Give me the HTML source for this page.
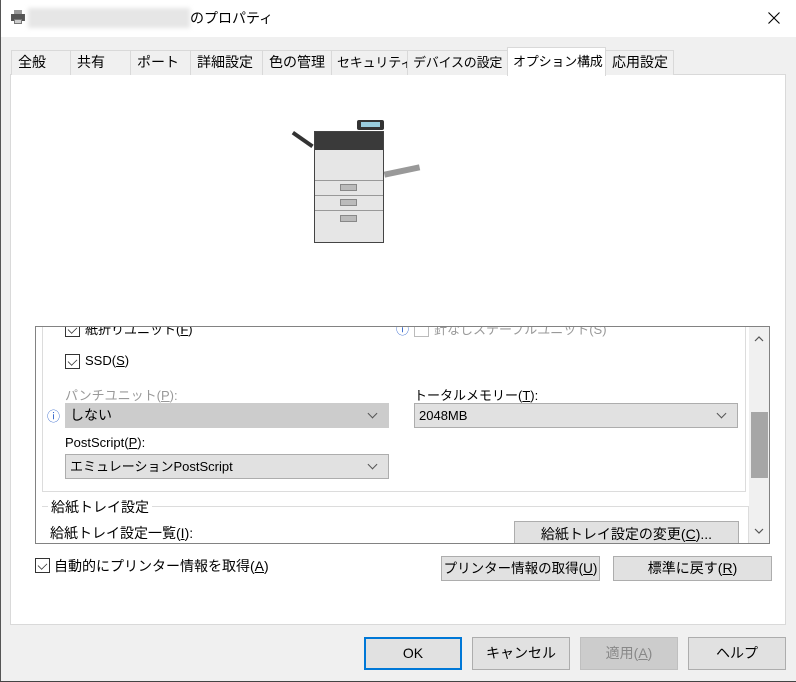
<!DOCTYPE html>
<html><head><meta charset="utf-8"><style>
*{box-sizing:border-box;margin:0;padding:0}
body{width:796px;height:682px;background:#f0f0f0;font-family:"Liberation Sans","Noto Sans CJK JP",sans-serif;font-size:13px;color:#000;position:relative;overflow:hidden}
.a{position:absolute;white-space:nowrap}
.tab{position:absolute;top:50px;height:25px;border:1px solid #d9d9d9;border-bottom:none;background:#f0f0f0;font-size:14px;line-height:23px;padding-left:6px;white-space:nowrap;overflow:hidden}
.tab.n{font-size:13px;letter-spacing:-0.2px;padding-left:5px}
.btn{position:absolute;background:#e1e1e1;border:1px solid #adadad;text-align:center;font-size:14px;white-space:nowrap}
.cb{position:absolute;width:15px;height:15px;border:1px solid #333;background:#fff}
.cb:after{content:"";position:absolute;left:3px;top:1px;width:6px;height:9px;border:solid #333;border-width:0 1.5px 1.5px 0;transform:rotate(45deg) scale(.8);}
.dd{position:absolute;height:25px;border:1px solid #adadad;background:#e1e1e1;line-height:23px;padding-left:4px;font-size:13px;white-space:nowrap}
.dd:after{content:"";position:absolute;right:12px;top:6px;width:6px;height:6px;border:solid #555;border-width:0 1px 1px 0;transform:rotate(45deg)}
u{text-decoration:underline}
</style></head><body>
<div class="a" style="left:0;top:0;width:796px;height:37px;background:#fff"></div>
<div class="a" style="left:0;top:0;width:1px;height:682px;background:#555"></div>
<div class="a" style="left:0;top:681px;width:796px;height:1px;background:#444"></div>
<div class="a" style="left:11px;top:10px;width:14px;height:14px;">
<div class="a" style="left:3px;top:0;width:8px;height:5px;background:#999"></div>
<div class="a" style="left:0;top:4px;width:14px;height:7px;background:#555"></div>
<div class="a" style="left:3px;top:9px;width:8px;height:5px;background:#ccc;border:1px solid #777"></div>
</div>
<div class="a" style="left:28px;top:8px;width:162px;height:20px;background:#e6e6e6;filter:blur(2px)"></div>
<div class="a" style="left:190px;top:8px;font-size:14px;line-height:20px">のプロパティ</div>
<svg class="a" style="left:768px;top:12px" width="12" height="12"><path d="M0.5 0.5L11.5 11.5M11.5 0.5L0.5 11.5" stroke="#000" stroke-width="1.1"/></svg>

<div class="a" style="left:10px;top:74px;width:776px;height:551px;background:#fff;border:1px solid #d9d9d9"></div>
<div class="tab" style="left:11px;width:60px">全般</div>
<div class="tab" style="left:70px;width:61px">共有</div>
<div class="tab" style="left:130px;width:61px">ポート</div>
<div class="tab" style="left:190px;width:73px">詳細設定</div>
<div class="tab" style="left:262px;width:70px">色の管理</div>
<div class="tab n" style="left:331px;width:77px">セキュリティ</div>
<div class="tab n" style="left:407px;width:101px">デバイスの設定</div>
<div class="tab n" style="left:507px;top:47px;height:29px;width:99px;background:#fff;line-height:27px;z-index:2">オプション構成</div>
<div class="tab" style="left:605px;width:69px">応用設定</div>

<div class="a" style="left:294px;top:131px;width:24px;height:4px;background:#333;transform:rotate(35deg);transform-origin:0 0"></div>
<div class="a" style="left:357px;top:120px;width:27px;height:10px;background:#333;border-radius:2px"></div>
<div class="a" style="left:361px;top:122px;width:19px;height:5px;background:#9cd"></div>
<div class="a" style="left:314px;top:131px;width:70px;height:112px;background:#e6e6e6;border:1px solid #444"></div>
<div class="a" style="left:315px;top:132px;width:68px;height:18px;background:#3a3a3a"></div>
<div class="a" style="left:315px;top:180px;width:68px;height:1px;background:#999"></div>
<div class="a" style="left:315px;top:195px;width:68px;height:1px;background:#999"></div>
<div class="a" style="left:315px;top:210px;width:68px;height:1px;background:#999"></div>
<div class="a" style="left:340px;top:184px;width:17px;height:7px;background:#bbb;border:1px solid #888"></div>
<div class="a" style="left:340px;top:199px;width:17px;height:7px;background:#bbb;border:1px solid #888"></div>
<div class="a" style="left:340px;top:215px;width:17px;height:7px;background:#bbb;border:1px solid #888"></div>
<div class="a" style="left:384px;top:168px;width:36px;height:6px;background:#999;transform:rotate(-12deg)"></div>

<div class="a" style="left:35px;top:326px;width:735px;height:218px;border:1px solid #828282;background:#fff;overflow:hidden">
 <div class="a" style="left:6px;top:-10px;width:704px;height:175px;border:1px solid #dcdcdc"></div>
 <div class="cb" style="left:29px;top:-5px"></div>
 <div class="a" style="left:49px;top:-8px;font-size:13px;color:#000">紙折りユニット(<u>F</u>)</div>
 <div class="a" style="left:360px;top:-8px;color:#36c">ⓘ</div>
 <div class="a" style="left:378px;top:-5px;width:15px;height:15px;border:1px solid #bbb"></div>
 <div class="a" style="left:398px;top:-8px;color:#999">針なしステープルユニット(S)</div>
 <div class="cb" style="left:29px;top:27px"></div>
 <div class="a" style="left:49px;top:26px">SSD(<u>S</u>)</div>
 <div class="a" style="left:29px;top:58px;color:#999">パンチユニット(<u>P</u>):</div>
 <div class="a" style="left:11px;top:79px;color:#36c">ⓘ</div>
 <div class="dd" style="left:29px;top:76px;width:324px;background:#ccc;border-color:#ccc;font-size:14px">しない</div>
 <div class="a" style="left:29px;top:108px">PostScript(<u>P</u>):</div>
 <div class="dd" style="left:29px;top:127px;width:324px">エミュレーションPostScript</div>
 <div class="a" style="left:378px;top:58px">トータルメモリー(<u>T</u>):</div>
 <div class="dd" style="left:378px;top:76px;width:324px">2048MB</div>
 <div class="a" style="left:6px;top:179px;width:707px;height:60px;border-top:1px solid #dcdcdc;border-right:1px solid #dcdcdc"></div>
 <div class="a" style="left:12px;top:170px;background:#fff;padding:0 3px;font-size:14px">給紙トレイ設定</div>
 <div class="a" style="left:14px;top:196px;font-size:14px">給紙トレイ設定一覧(<u>I</u>):</div>
 <div class="btn" style="left:478px;top:194px;width:225px;height:28px;line-height:24px">給紙トレイ設定の変更(<u>C</u>)...</div>
 <div class="a" style="left:713px;top:0;width:20px;height:216px;background:#f0f0f0"></div>
 <div class="a" style="left:715px;top:85px;width:17px;height:66px;background:#a6a6a6"></div>
 <svg class="a" style="left:718px;top:9px" width="10" height="6"><path d="M1 5L5 1L9 5" fill="none" stroke="#555" stroke-width="1.2"/></svg>
 <svg class="a" style="left:718px;top:201px" width="10" height="6"><path d="M1 1L5 5L9 1" fill="none" stroke="#555" stroke-width="1.2"/></svg>
</div>

<div class="cb" style="left:35px;top:558px"></div>
<div class="a" style="left:54px;top:556px;font-size:14px">自動的にプリンター情報を取得(<u>A</u>)</div>
<div class="btn" style="left:441px;top:556px;width:159px;height:25px;line-height:23px;font-size:13.5px">プリンター情報の取得(<u>U</u>)</div>
<div class="btn" style="left:613px;top:556px;width:159px;height:25px;line-height:23px">標準に戻す(<u>R</u>)</div>

<div class="btn" style="left:364px;top:637px;width:98px;height:33px;line-height:29px;border:2px solid #0078d7">OK</div>
<div class="btn" style="left:472px;top:637px;width:98px;height:33px;line-height:31px">キャンセル</div>
<div class="btn" style="left:580px;top:637px;width:98px;height:33px;line-height:31px;background:#ccc;border-color:#bfbfbf;color:#888">適用(<u>A</u>)</div>
<div class="btn" style="left:688px;top:637px;width:98px;height:33px;line-height:31px">ヘルプ</div>
</body></html>
